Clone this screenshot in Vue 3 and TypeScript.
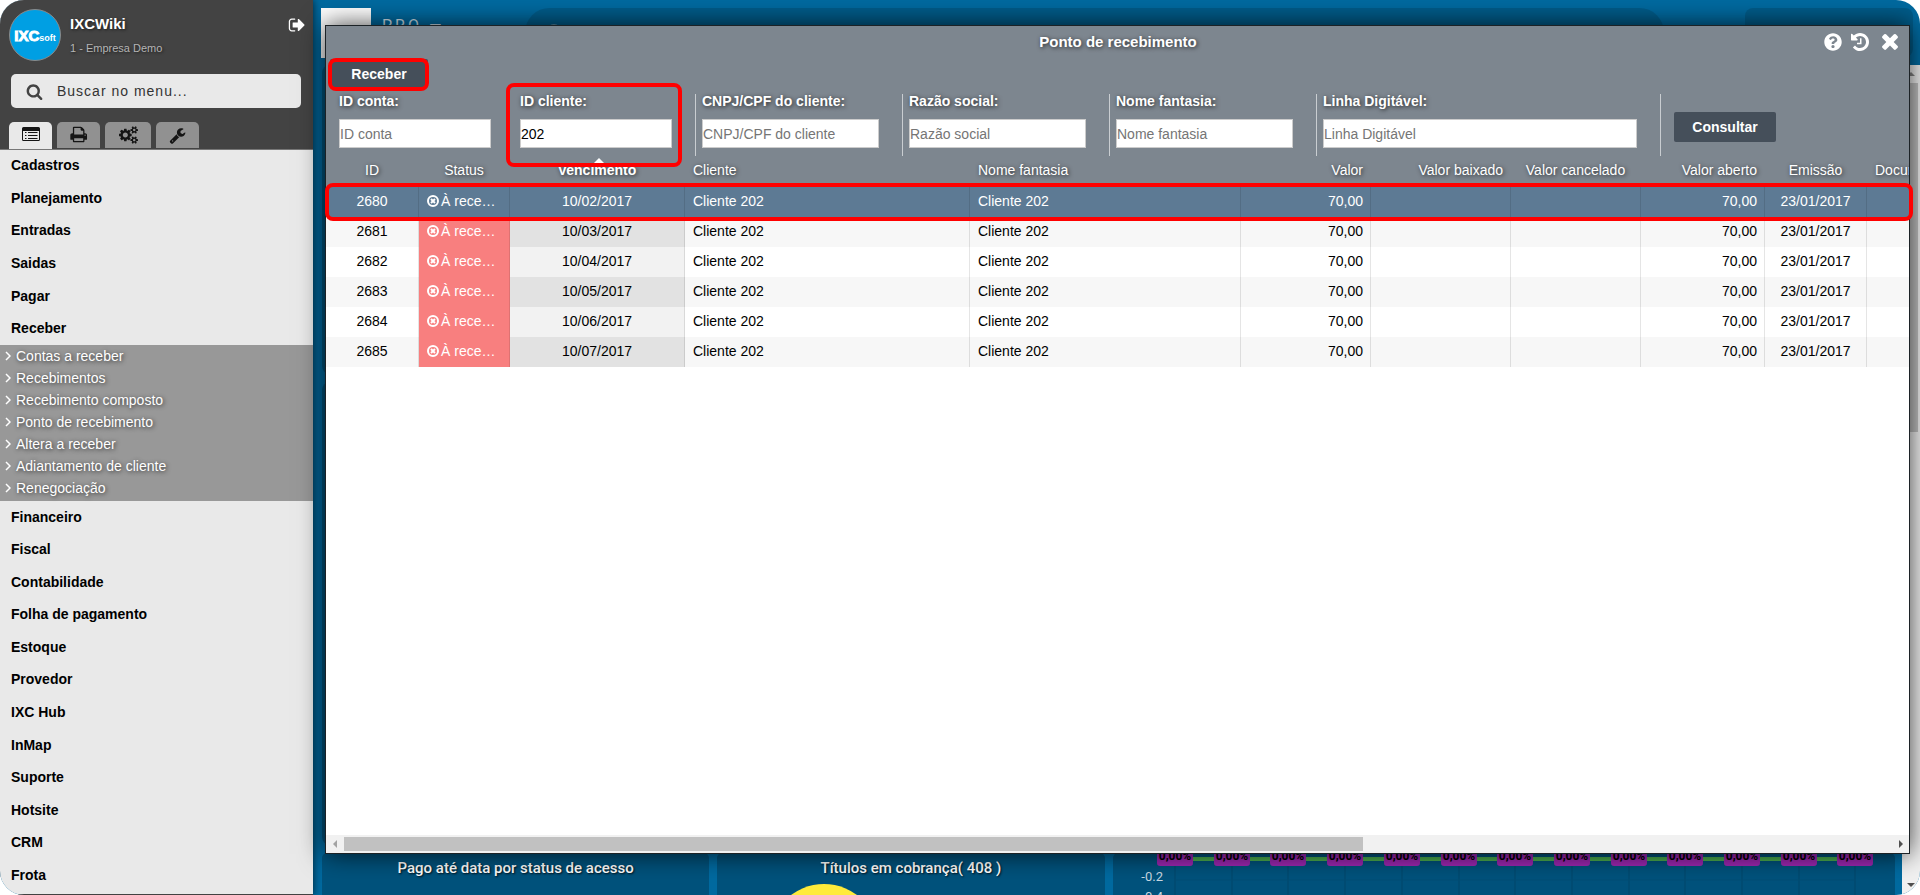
<script setup lang="ts">
import { ref } from 'vue'

interface Field {
  id: string
  label: string
  placeholder: string
  size: 'small' | 'medium' | 'large'
  divided: boolean
}

interface Row {
  id: number
  due: string
}

const menuTop: string[] = ['Cadastros', 'Planejamento', 'Entradas', 'Saidas', 'Pagar', 'Receber']
const submenu: string[] = [
  'Contas a receber',
  'Recebimentos',
  'Recebimento composto',
  'Ponto de recebimento',
  'Altera a receber',
  'Adiantamento de cliente',
  'Renegociação',
]
const menuBottom: string[] = [
  'Financeiro',
  'Fiscal',
  'Contabilidade',
  'Folha de pagamento',
  'Estoque',
  'Provedor',
  'IXC Hub',
  'InMap',
  'Suporte',
  'Hotsite',
  'CRM',
  'Frota',
]

const fields: Field[] = [
  { id: 'conta', label: 'ID conta:', placeholder: 'ID conta', size: 'small', divided: false },
  { id: 'cliente', label: 'ID cliente:', placeholder: 'ID cliente', size: 'small', divided: false },
  { id: 'cnpj', label: 'CNPJ/CPF do cliente:', placeholder: 'CNPJ/CPF do cliente', size: 'medium', divided: true },
  { id: 'razao', label: 'Razão social:', placeholder: 'Razão social', size: 'medium', divided: true },
  { id: 'fantasia', label: 'Nome fantasia:', placeholder: 'Nome fantasia', size: 'medium', divided: true },
  { id: 'linha', label: 'Linha Digitável:', placeholder: 'Linha Digitável', size: 'large', divided: true },
]
const values = ref<Record<string, string>>({
  conta: '',
  cliente: '202',
  cnpj: '',
  razao: '',
  fantasia: '',
  linha: '',
})

const rows: Row[] = [
  { id: 2680, due: '10/02/2017' },
  { id: 2681, due: '10/03/2017' },
  { id: 2682, due: '10/04/2017' },
  { id: 2683, due: '10/05/2017' },
  { id: 2684, due: '10/06/2017' },
  { id: 2685, due: '10/07/2017' },
]
const selected = ref<number>(2680)
const search = ref<string>('')

const points: number[] = Array.from({ length: 13 }, (_, i) => Math.round(62 + i * 56.7))
</script>

<template>
  <div class="app">
    <aside class="sidebar">
      <header class="side-head">
        <div class="profile">
          <div class="avatar"><b>IXC</b><small>soft</small></div>
          <div class="who">
            <strong>IXCWiki</strong>
            <span>1 - Empresa Demo</span>
          </div>
          <button class="logout" type="button" aria-label="Sair">
            <svg viewBox="0 0 1664 1792" width="17" height="18"><path d="M704 1440q0 4 1 20t.5 26.500-3 23.500-10 19.500-20.500 6.500h-320q-119 0-203.500-84.500t-84.500-203.500v-704q0-119 84.500-203.500t203.500-84.500h320q13 0 22.500 9.500t9.500 22.500q0 4 1 20t.5 26.500-3 23.500-10 19.500-20.500 6.500h-320q-66 0-113 47t-47 113v704q0 66 47 113t113 47h312l11.500 1 11.500 3 8 5.500 7 9 2 13.500zm928-544q0 26-19 45l-544 544q-19 19-45 19t-45-19-19-45v-288h-448q-26 0-45-19t-19-45v-384q0-26 19-45t45-19h448v-288q0-26 19-45t45-19 45 19l544 544q19 19 19 45z" /></svg>
          </button>
        </div>
        <label class="menu-search">
          <svg viewBox="0 0 1792 1792" width="17" height="17"><path d="M1216 832q0-185-131.500-316.500t-316.500-131.500-316.500 131.500-131.500 316.500 131.500 316.500 316.500 131.500 316.500-131.500 131.500-316.500zm512 832q0 52-38 90t-90 38q-54 0-90-38l-343-342q-179 124-399 124-143 0-273.500-55.500t-225-150-150-225-55.500-273.500 55.500-273.500 150-225 225-150 273.500-55.500 273.500 55.500 225 150 150 225 55.500 273.500q0 220-124 399l343 343q37 37 37 90z" /></svg>
          <input v-model="search" type="text" placeholder="Buscar no menu..." aria-label="Buscar no menu" />
        </label>
        <nav class="tabs" aria-label="Seções">
          <button type="button" class="tab active" aria-label="Menu">
            <svg viewBox="0 0 18 14" width="18" height="14">
              <path fill-rule="evenodd" d="M1.500 0h15A1.500 1.500 0 0 1 18 1.500v11a1.500 1.500 0 0 1-1.500 1.500h-15A1.500 1.500 0 0 1 0 12.500v-11A1.500 1.500 0 0 1 1.500 0zM1 4v8.500a.5.5 0 0 0 .5.5h15a.5.5 0 0 0 .5-.5V4z" />
              <path d="M3 5h1.500v1H3zM6 5h9.500v1H6zM3 8h1.500v1H3zM6 8h9.500v1H6zM3 11h1.500v1H3zM6 11h9.500v1H6z" />
            </svg>
          </button>
          <button type="button" class="tab" aria-label="Relatórios">
            <svg viewBox="0 0 1792 1792" width="18" height="18"><path d="M448 1536h896v-256h-896v256zm0-640h896v-384h-160q-40 0-68-28t-28-68v-160h-640v640zm1152 64q0-26-19-45t-45-19-45 19-19 45 19 45 45 19 45-19 19-45zm128 0v416q0 13-9.500 22.500t-22.500 9.500h-224v160q0 40-28 68t-68 28h-960q-40 0-68-28t-28-68v-160h-224q-13 0-22.500-9.500t-9.500-22.500v-416q0-79 56.500-135.500t135.500-56.500h64v-544q0-40 28-68t68-28h672q40 0 88 20t76 48l152 152q28 28 48 76t20 88v256h64q79 0 135.500 56.500t56.500 135.500z" transform="translate(-32 -50)" /></svg>
          </button>
          <button type="button" class="tab wide" aria-label="Configurações">
            <svg viewBox="0 0 1920 1792" width="19" height="18"><path d="M896 896q0-106-75-181t-181-75-181 75-75 181 75 181 181 75 181-75 75-181zm768 512q0-52-38-90t-90-38-90 38-38 90q0 53 37.500 90.500t90.500 37.500 90.500-37.500 37.500-90.500zm0-1024q0-52-38-90t-90-38-90 38-38 90q0 53 37.500 90.500t90.500 37.500 90.500-37.500 37.500-90.500zm-384 421v185q0 10-7 19.500t-16 10.500l-155 24q-11 35-32 76 34 48 90 115 7 11 7 20 0 12-7 19-23 30-82.500 89.500t-78.500 59.500q-11 0-21-7l-115-90q-37 19-77 31-11 108-23 155-7 24-30 24h-186q-11 0-20-7.500t-10-17.500l-23-153q-34-10-75-31l-118 89q-7 7-20 7-11 0-21-8-144-133-144-160 0-9 7-19 10-14 41-53t47-61q-23-44-35-82l-152-24q-10-1-17-9.500t-7-19.500v-185q0-10 7-19.500t16-10.500l155-24q11-35 32-76-34-48-90-115-7-11-7-20 0-12 7-20 22-30 82-89t79-59q11 0 21 7l115 90q34-18 77-32 11-108 23-154 7-24 30-24h186q11 0 20 7.500t10 17.500l23 153q34 10 75 31l118-89q8-7 20-7 11 0 21 8 144 133 144 160 0 8-7 19-12 16-42 54t-45 60q23 48 34 82l152 23q10 2 17 10.500t7 19.500zm640 533v140q0 16-149 31-12 27-30 52 51 113 51 138 0 4-4 7-122 71-124 71-8 0-46-47t-52-68q-20 2-30 2t-30-2q-14 21-52 68t-46 47q-2 0-124-71-4-3-4-7 0-25 51-138-18-25-30-52-149-15-149-31v-140q0-16 149-31 13-29 30-52-51-113-51-138 0-4 4-7 4-2 35-20t59-34 30-16q8 0 46 46.500t52 67.500q20-2 30-2t30 2q51-71 92-112l6-2q4 0 124 70 4 3 4 7 0 25-51 138 17 23 30 52 149 15 149 31zm0-1024v140q0 16-149 31-12 27-30 52 51 113 51 138 0 4-4 7-122 71-124 71-8 0-46-47t-52-68q-20 2-30 2t-30-2q-14 21-52 68t-46 47q-2 0-124-71-4-3-4-7 0-25 51-138-18-25-30-52-149-15-149-31v-140q0-16 149-31 13-29 30-52-51-113-51-138 0-4 4-7 4-2 35-20t59-34 30-16q8 0 46 46.500t52 67.500q20-2 30-2t30 2q51-71 92-112l6-2q4 0 124 70 4 3 4 7 0 25-51 138 17 23 30 52 149 15 149 31z" /></svg>
          </button>
          <button type="button" class="tab" aria-label="Ferramentas">
            <svg viewBox="0 0 1792 1792" width="17" height="17"><path d="M448 1472q0-26-19-45t-45-19-45 19-19 45 19 45 45 19 45-19 19-45zm644-420l-682 682q-37 37-90 37-52 0-91-37l-106-108q-38-36-38-90 0-53 38-91l681-681q39 98 114.500 173.500t173.500 114.500zm634-435q0 39-23 106-47 134-164.500 217.500t-258.500 83.500q-185 0-316.500-131.500t-131.500-316.500 131.500-316.500 316.500-131.500q58 0 121.500 16.500t107.500 46.500q16 11 16 28t-16 28l-293 169v224l193 107q5-3 79-48.500t135.500-81 70.500-35.500q15 0 23.500 10t8.500 25z" /></svg>
          </button>
        </nav>
      </header>
      <nav class="menu" aria-label="Menu principal">
        <a v-for="item in menuTop" :key="item" href="#" class="item">{{ item }}</a>
        <div class="submenu">
          <a v-for="item in submenu" :key="item" href="#">
            <svg viewBox="0 0 6 10" width="6" height="10"><path d="M1 1l4 4-4 4" fill="none" stroke="#fff" stroke-width="1.500" /></svg>
            {{ item }}
          </a>
        </div>
        <a v-for="item in menuBottom" :key="item" href="#" class="item">{{ item }}</a>
      </nav>
    </aside>

    <main class="board">
      <header class="board-head">
        <div class="logo"></div>
        <div class="brand">PRO —</div>
        <div class="pill">
          <svg viewBox="0 0 16 16" width="16" height="16"><circle cx="7" cy="7" r="6" fill="none" stroke="#5d8aa3" stroke-width="2" /></svg>
        </div>
        <div class="user-box"></div>
      </header>
      <div class="board-body">
        <div class="grid">
          <section class="card full"></section>
          <section class="card full"></section>
          <section class="card">
            <h3>Pago até data por status de acesso</h3>
          </section>
          <section class="card">
            <h3>Títulos em cobrança( 408 )</h3>
            <div class="pie"></div>
          </section>
          <section class="card double">
            <svg class="chart" width="100%" height="42">
              <line v-for="x in points" :key="'g' + x" :x1="x" :x2="x" y1="0" y2="42" stroke="#00466b" />
              <line x1="62" x2="742" y1="27" y2="27" stroke="#004c74" />
              <line x1="62" x2="742" y1="6" y2="6" stroke="#4caf50" stroke-width="4" />
              <g v-for="x in points" :key="x">
                <rect :x="x - 18" y="-8" width="36" height="21" rx="3" fill="#9c27b0" />
                <text :x="x" y="7" text-anchor="middle" class="badge-text">0,00%</text>
              </g>
              <text x="50" y="28" text-anchor="end" class="axis">-0.2</text>
              <text x="50" y="48" text-anchor="end" class="axis">-0.4</text>
            </svg>
          </section>
        </div>
        <div class="vbar">
          <i class="up"></i>
          <div class="vthumb"></div>
          <i class="down"></i>
        </div>
      </div>
    </main>

    <section class="modal" role="dialog" aria-label="Ponto de recebimento">
      <header class="modal-head">
        <h2>Ponto de recebimento</h2>
        <div class="actions">
          <button type="button" aria-label="Ajuda">
            <svg viewBox="0 0 512 512" width="18" height="18"><path d="M504 256c0 136.997-111.043 248-248 248S8 392.997 8 256C8 119.083 119.043 8 256 8s248 111.083 248 248zM262.655 90c-54.497 0-89.255 22.957-116.549 63.758-3.536 5.286-2.353 12.415 2.715 16.258l34.699 26.310c5.205 3.947 12.621 3.008 16.665-2.122 17.864-22.658 30.113-35.797 57.303-35.797 20.429 0 45.698 13.148 45.698 32.958 0 14.976-12.363 22.667-32.534 33.976C247.128 238.528 216 254.941 216 296v4c0 6.627 5.373 12 12 12h56c6.627 0 12-5.373 12-12v-1.333c0-28.462 83.186-29.647 83.186-106.667 0-58.002-60.165-102-116.531-102zM256 338c-25.365 0-46 20.635-46 46 0 25.364 20.635 46 46 46s46-20.636 46-46c0-25.365-20.635-46-46-46z" /></svg>
          </button>
          <button type="button" aria-label="Histórico">
            <svg viewBox="0 128 1536 1536" width="18" height="18"><path d="M1536 896q0 156-61 298t-164 245-245 164-298 61q-172 0-327-72.500T177 1387q-7-10-6.500-22.500t8.500-20.500l137-138q10-9 25-9 16 2 23 12 73 95 179 147t225 52q104 0 198.500-40.500T1130 1260t109.500-163.500T1280 898t-40.500-198.500T1130 536 966.500 426.500 768 386q-98 0-188 35.500T420 522l137 138q31 30 14 69-17 40-59 40H64q-26 0-45-19T0 705V257q0-42 40-59 39-17 69 14l130 129q107-101 244.500-156.500T768 129q156 0 298 61t245 164 164 245 61 297zm-640-288v448q0 14-9 23t-23 9H544q-14 0-23-9t-9-23v-64q0-14 9-23t23-9h224V608q0-14 9-23t23-9h64q14 0 23 9t9 23z" /></svg>
          </button>
          <button type="button" class="close" aria-label="Fechar">
            <svg viewBox="302 302 1188 1252" width="16" height="17"><path d="M1490 1322q0 40-28 68l-136 136q-28 28-68 28t-68-28l-294-294-294 294q-28 28-68 28t-68-28l-136-136q-28-28-28-68t28-68l294-294-294-294q-28-28-28-68t28-68l136-136q28-28 68-28t68 28l294 294 294-294q28-28 68-28t68 28l136 136q28 28 28 68t-28 68l-294 294 294 294q28 28 28 68z" /></svg>
          </button>
        </div>
      </header>
      <div class="toolbar">
        <button type="button" class="dark receive">Receber</button>
      </div>
      <form class="filters" @submit.prevent>
        <div v-for="f in fields" :key="f.id" class="field" :class="[f.size, { divided: f.divided }]">
          <label :for="f.id">{{ f.label }}</label>
          <input :id="f.id" v-model="values[f.id]" type="text" :placeholder="f.placeholder" />
        </div>
        <div class="field divided submit">
          <button type="submit" class="dark">Consultar</button>
        </div>
      </form>
      <div class="table-area">
        <table>
          <colgroup>
            <col class="c-id" /><col class="c-status" /><col class="c-due" /><col class="c-client" /><col class="c-name" />
            <col class="c-130" /><col class="c-140" /><col class="c-130" /><col class="c-open" /><col class="c-issue" /><col class="c-130" />
          </colgroup>
          <thead>
            <tr>
              <th class="mid">ID</th>
              <th class="mid">Status</th>
              <th class="mid sorted">Vencimento</th>
              <th>Cliente</th>
              <th>Nome fantasia</th>
              <th class="num">Valor</th>
              <th class="num">Valor baixado</th>
              <th class="mid">Valor cancelado</th>
              <th class="num">Valor aberto</th>
              <th class="mid">Emissão</th>
              <th>Documento</th>
            </tr>
          </thead>
          <tbody>
            <tr v-for="r in rows" :key="r.id" :class="{ selected: r.id === selected }" @click="selected = r.id">
              <td class="mid">{{ r.id }}</td>
              <td class="status">
                <svg viewBox="0 0 12 12" width="12" height="12"><circle cx="6" cy="6" r="5" fill="none" stroke="#fff" stroke-width="2" /><path d="M4 4l4 4M8 4l-4 4" stroke="#fff" stroke-width="2" /></svg><span>À rece…</span>
              </td>
              <td class="mid due">{{ r.due }}</td>
              <td>Cliente 202</td>
              <td>Cliente 202</td>
              <td class="num">70,00</td>
              <td></td>
              <td></td>
              <td class="num">70,00</td>
              <td class="mid">23/01/2017</td>
              <td></td>
            </tr>
          </tbody>
        </table>
      </div>
      <div class="hbar">
        <i class="left"></i>
        <div class="rail"><div class="hthumb"></div></div>
        <i class="right"></i>
      </div>
      <div class="mark mark-receive"></div>
      <div class="mark mark-client"></div>
      <div class="mark mark-row"></div>
    </section>
  </div>
</template>

<style>
body {
  margin: 0;
  background: #fff;
}
</style>

<style scoped>
* {
  box-sizing: border-box;
}
.app {
  position: relative;
  display: flex;
  height: 100vh;
  overflow: hidden;
  border-radius: 24px;
  background: #006aa0;
  font-family: 'Liberation Sans', Arial, sans-serif;
  font-size: 14px;
  color: #000;
}
button {
  font: inherit;
  border: 0;
  padding: 0;
  cursor: pointer;
}
a {
  color: inherit;
  text-decoration: none;
}
svg {
  display: block;
}

/* Sidebar */
.sidebar {
  position: relative;
  flex: 0 0 313px;
  display: flex;
  flex-direction: column;
  background: #e9e9e9;
  border-bottom: 1px solid #424242;
  box-shadow: 0 0 8px rgba(0, 0, 0, 0.7);
}
.side-head {
  display: flex;
  flex-direction: column;
  height: 150px;
  background: #434343;
  border-bottom: 1px solid #777;
}
.profile {
  display: flex;
  padding: 9px 8px 0 9px;
  height: 75px;
}
.avatar {
  display: flex;
  align-items: baseline;
  justify-content: center;
  width: 52px;
  height: 52px;
  border: 1px solid #8a8a8a;
  border-radius: 50%;
  background: #009fe3;
  color: #fff;
  line-height: 52px;
}
.avatar b {
  font-size: 15px;
  -webkit-text-stroke: 1px #fff;
}
.avatar small {
  font-size: 9px;
  font-weight: bold;
}
.who {
  flex: 1;
  display: flex;
  flex-direction: column;
  gap: 6px;
  padding: 6px 0 0 9px;
  text-shadow: 1px 1px 3px rgba(0, 0, 0, 0.6);
}
.who strong {
  font-size: 15px;
  line-height: 18px;
  color: #fff;
}
.who span {
  font-size: 11px;
  line-height: 18px;
  color: #b5b5b5;
}
.logout {
  height: 18px;
  margin-top: 7px;
  background: none;
}
.logout svg {
  fill: #fff;
}
.menu-search {
  display: flex;
  align-items: center;
  gap: 14px;
  height: 34px;
  margin: 0 12px 0 11px;
  padding: 0 15px;
  border-radius: 5px;
  background: #e9e9e9;
}
.menu-search svg {
  fill: #434343;
}
.menu-search input {
  flex: 1;
  min-width: 0;
  border: 0;
  padding: 0;
  outline: 0;
  background: none;
  font: inherit;
  letter-spacing: 1px;
}
.menu-search input::placeholder {
  color: #333;
}
.tabs {
  display: flex;
  gap: 5px;
  margin: 14px 0 0 9px;
  height: 27px;
}
.tab {
  display: flex;
  align-items: center;
  justify-content: center;
  width: 43px;
  height: 26px;
  border-radius: 5px 5px 0 0;
  background: #919191;
}
.tab.wide {
  width: 46px;
}
.tab.active {
  height: 27px;
  padding-bottom: 3px;
  background: #e9e9e9;
}
.tab svg {
  fill: #151515;
}
.menu {
  flex: 1;
  display: flex;
  flex-direction: column;
  padding-bottom: 2px;
}
.item {
  flex: 1;
  display: flex;
  align-items: center;
  padding: 0 0 2px 11px;
  font-weight: bold;
}
.submenu {
  padding-bottom: 2px;
  background: #989898;
  color: #fff;
  text-shadow: 1px 1px 4px rgba(0, 0, 0, 0.7);
}
.submenu a {
  display: flex;
  align-items: center;
  gap: 5px;
  height: 22px;
  padding-left: 5px;
}

/* Dashboard behind the dialog */
.board {
  flex: 1;
  display: flex;
  flex-direction: column;
  min-width: 0;
}
.board-head {
  display: flex;
  height: 65px;
  padding: 8px 7px 8px 8px;
}
.logo {
  width: 50px;
  height: 50px;
  background: #fff;
}
.brand {
  width: 143px;
  margin-left: 11px;
  padding-top: 7px;
  font-family: Roboto, sans-serif;
  font-size: 16px;
  font-weight: 400;
  line-height: 21px;
  letter-spacing: 3px;
  color: #d5e5ef;
}
.pill {
  flex: 1;
  height: 49px;
  padding: 16px 22px;
  border-radius: 25px;
  background: #005c8a;
}
.user-box {
  width: 168px;
  height: 49px;
  margin-left: 81px;
  border-radius: 8px;
  background: #005c8a;
}
.board-body {
  flex: 1;
  display: flex;
  min-height: 0;
}
.grid {
  flex: 1;
  display: grid;
  grid-template: 2fr 3fr 42px / repeat(4, 1fr);
  gap: 8px;
  padding: 0 7px 0 9px;
}
.card {
  position: relative;
  overflow: hidden;
  border-radius: 5px 5px 0 0;
  background: #00527c;
}
.card.full {
  grid-column: span 4;
  border-radius: 8px;
}
.card.double {
  grid-column: span 2;
}
.card h3 {
  margin: 0;
  padding-top: 5px;
  font: 500 15px/20px Roboto, sans-serif;
  text-align: center;
  color: #fff;
  text-shadow: 1px 1px 2px rgba(0, 0, 0, 0.8);
}
.pie {
  width: 110px;
  height: 110px;
  margin: 6px 0 0 52px;
  border-radius: 50%;
  background: #ffeb3b;
}
.badge-text {
  font: bold 12px Roboto, sans-serif;
  fill: #000;
}
.axis {
  font: 13px Roboto, sans-serif;
  fill: #c8d8e2;
}
.vbar {
  display: flex;
  flex-direction: column;
  align-items: center;
  width: 18px;
  background: #f1f1f1;
}
.vbar i {
  width: 0;
  border: 4px solid transparent;
}
.vbar .up {
  margin: 3px 0 7px;
  border-bottom-color: #888;
}
.vbar .down {
  margin: auto 0 4px;
  border-top-color: #505050;
}
.vthumb {
  width: 14px;
  height: 42%;
  background: #c1c1c1;
}

/* Dialog */
.modal {
  position: absolute;
  inset: 25px 10px 41px 325px;
  display: flex;
  flex-direction: column;
  border: 1px solid #1c2226;
  background: #7d868f;
  box-shadow: 0 0 24px rgba(0, 0, 0, 0.75);
}
.modal-head {
  display: flex;
  align-items: center;
  height: 31px;
}
.modal-head h2 {
  flex: 1;
  margin: 0 0 0 86px;
  font-size: 15px;
  line-height: 18px;
  text-align: center;
  color: #fff;
  text-shadow: 1px 1px 4px rgba(0, 0, 0, 0.7);
}
.actions {
  display: flex;
  align-items: center;
  gap: 9px;
  padding-right: 11px;
}
.actions button {
  background: none;
}
.actions svg {
  fill: #fff;
}
.actions .close {
  margin-left: 4px;
}
.toolbar {
  padding: 2px 4px 0;
  height: 37px;
}
.dark {
  border-radius: 2px;
  background: #454f5a;
  color: #fff;
  font-weight: bold;
}
.receive {
  width: 98px;
  height: 29px;
}
.filters {
  display: flex;
  height: 63px;
  padding-left: 7px;
}
.field {
  display: flex;
  flex-direction: column;
  height: 62px;
  padding: 0 23px 0 6px;
}
.field.divided {
  border-left: 1px solid #c9cdd1;
}
.field label {
  height: 25px;
  line-height: 15px;
  font-weight: bold;
  color: #fff;
  text-shadow: 1px 1px 4px rgba(0, 0, 0, 0.75);
}
.field input {
  height: 29px;
  padding: 0;
  border: 1px solid #ccc;
  outline: 0;
  background: #fff;
  font: inherit;
}
.field input::placeholder {
  color: #757575;
}
.small input {
  width: 152px;
}
.medium input {
  width: 177px;
}
.large input {
  width: 314px;
}
.field.submit {
  padding: 18px 0 0 13px;
}
.submit .dark {
  width: 102px;
  height: 30px;
}
.table-area {
  flex: 1;
  min-height: 0;
  overflow: hidden;
  background: #fff;
}
table {
  width: 1671px;
  table-layout: fixed;
  border-collapse: separate;
  border-spacing: 0;
}
.c-id {
  width: 93px;
}
.c-status {
  width: 91px;
}
.c-due {
  width: 175px;
}
.c-client {
  width: 285px;
}
.c-name {
  width: 271px;
}
.c-130 {
  width: 130px;
}
.c-140 {
  width: 140px;
}
.c-open {
  width: 124px;
}
.c-issue {
  width: 102px;
}
th,
td {
  height: 30px;
  padding: 0 7px 2px 8px;
  border-right: 1px solid rgba(0, 0, 0, 0.1);
  text-align: left;
  white-space: nowrap;
}
th {
  padding-bottom: 4px;
  border-color: transparent;
  background: #7d868f;
  font-weight: normal;
  color: #fff;
  text-shadow: 1px 1px 4px rgba(0, 0, 0, 0.7);
}
th.sorted {
  position: relative;
  font-weight: bold;
}
th.sorted::before {
  content: '';
  position: absolute;
  top: 1px;
  left: 50%;
  margin-left: -3px;
  border: 5px solid transparent;
  border-top: 0;
  border-bottom-color: #fff;
}
.mid {
  padding-left: 0;
  padding-right: 0;
  text-align: center;
}
.num {
  text-align: right;
}
tbody tr:nth-child(even) {
  background: #f7f7f7;
}
.due {
  background: #f2f2f2;
}
tr:nth-child(even) .due {
  background: #e2e2e2;
}
.status {
  background: #f87f7f;
  color: #fff;
}
.status svg {
  display: inline-block;
  vertical-align: -1px;
  margin-right: 2px;
}
tbody tr.selected {
  color: #fff;
}
tbody tr.selected td {
  background: #5d7a94;
}
.hbar {
  display: flex;
  align-items: center;
  height: 18px;
  background: #f1f1f1;
}
.rail {
  flex: 1;
}
.hthumb {
  width: 65.8%;
  height: 14px;
  background: #c1c1c1;
}
.hbar i {
  border: 4px solid transparent;
}
.hbar .left {
  margin: 0 7px 0 3px;
  border-right-color: #a3a3a3;
}
.hbar .right {
  margin: 0 2px 0 7px;
  border-left-color: #505050;
}
.mark {
  position: absolute;
  border: 4px solid #f00;
  border-radius: 8px;
  pointer-events: none;
}
.mark-receive {
  left: 2px;
  top: 32px;
  width: 101px;
  height: 33px;
}
.mark-client {
  left: 180px;
  top: 57px;
  width: 176px;
  height: 84px;
}
.mark-row {
  left: -1px;
  right: -4px;
  top: 157px;
  height: 38px;
}
</style>
